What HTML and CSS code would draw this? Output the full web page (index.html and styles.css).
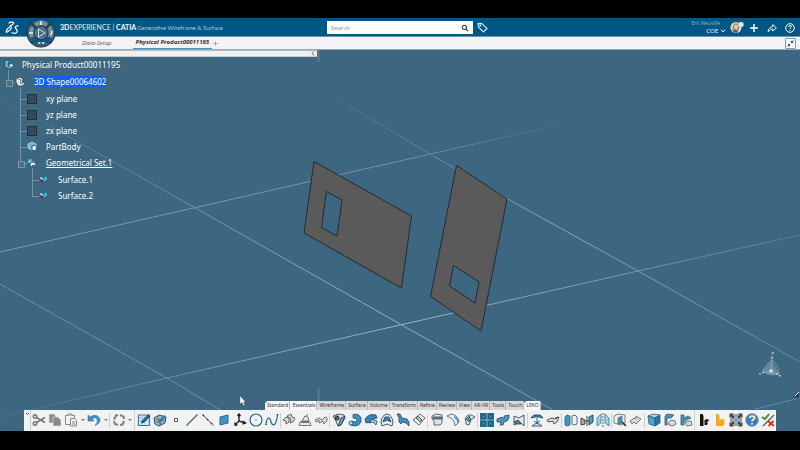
FILE: index.html
```html
<!DOCTYPE html>
<html lang="en">
<head>
<meta charset="utf-8">
<title>3DEXPERIENCE | CATIA</title>
<link rel="stylesheet" href="styles.css">
</head>
<body>
<header class="topbar">
  <div class="left">
  <svg class="logo" viewBox="0 0 14 14" fill="none" stroke="#fff" stroke-width="1.2"><path d="M3.5 2.2C6 .6 9.300 .8 8.500 2.600C7.800 4 5.500 4.600 4.500 4.600C7 4.800 6.800 8 4 9.800C2 11.200 .8 12.500 1.500 9.500C2 8 3.500 6.500 5 6M13.500 5.200C11.500 4.200 9.500 5.500 10.500 7.200C11.500 8.500 13 9.200 12 11C11 12.800 8 12.600 6.500 11.400"/></svg>
  <button class="compass" aria-label="Compass">
    <svg viewBox="0 0 30 30"><defs><radialGradient id="ring"><stop offset=".4" stop-color="#527186"/><stop offset=".72" stop-color="#8199a9"/><stop offset="1" stop-color="#16324a"/></radialGradient></defs>
      <circle cx="15" cy="15" r="14.500" fill="url(#ring)"/><path d="M5 5L11 11M25 5L19 11M5 25L11 19M25 25L19 19" stroke="#24445e" stroke-width="3"/><path d="M3.500 20A13 13 0 0 0 26.500 20L20 18A7 7 0 0 1 10 18Z" fill="#14567f"/><circle cx="15" cy="15" r="7" fill="#34566e" stroke="#17364d"/><circle cx="15" cy="15" r="5.500" fill="#456a82" stroke="#7898aa" stroke-width=".6"/><path d="M12.500 11L19 15L12.500 19Z" fill="none" stroke="#d5e1e8"/><path d="M15 3v4M3 15h4M26 13l-1 4M12 25h2.500M16 25h2.500" stroke="#f1f6f9" stroke-width="1.500"/></svg>
  </button>
  <h1 class="brand"><b>3D</b>EXPERIENCE | <b>CATIA</b><span>Generative Wireframe &amp; Surface</span></h1>
  </div>
  <form class="search"><input type="search" placeholder="Search" aria-label="Search"><button type="button" aria-label="Search"><svg viewBox="0 0 10 10" fill="none" stroke="#333" stroke-width="1.300"><circle cx="4.200" cy="4.200" r="2.600"/><path d="M6.200 6.200L9 9"/></svg></button></form>
  <div class="right">
  <button class="tool-link" aria-label="Tags"><svg viewBox="0 0 11 11" fill="none" stroke="#dce9f1" stroke-width="1.100"><path d="M1 1.500L4.500 1.200L10 6.500L6.500 10L1.300 5Z"/><circle cx="3.300" cy="3.400" r=".6"/></svg></button>
  <div class="user"><span>Eric Neuville</span><button>COE <svg viewBox="0 0 6 4" fill="none" stroke="#fff"><path d="M.8 .8L3 2.700L5.200 .8"/></svg></button></div>
  <svg class="avatar" viewBox="0 0 14 13"><circle cx="6" cy="6.500" r="5.500" fill="#dbe0db"/><path d="M2 10L3 4Q6 0 9 4L9 9L6 12Z" fill="#b88b62"/><path d="M4 4h4l-1 5H5Z" fill="#e9c8aa"/><path d="M3 11L5 8L8 10L7 12Z" fill="#4d6577"/><circle cx="11" cy="3.500" r="2.600" fill="#e4e7e8" stroke="#a6b5bd" stroke-width=".5"/></svg>
  <nav class="actions">
    <button aria-label="Add"><svg viewBox="0 0 10 10" stroke="#fff" stroke-width="1.500"><path d="M5 1v8M1 5h8"/></svg></button>
    <button aria-label="Share"><svg viewBox="0 0 10 10" fill="none" stroke="#e5eff5"><path d="M1 8.800Q1.500 4 5.800 3.800V1.500L9.400 5L5.800 8V6Q3 6 1 8.800Z"/></svg></button>
    <button aria-label="Help"><svg viewBox="0 0 10 10" fill="none" stroke="#fff"><circle cx="5" cy="5" r="4.300"/><path d="M3.500 4Q3.800 2.500 5 2.500Q6.600 2.600 6.400 3.900Q5.200 4.700 5 6M5 7v1"/></svg></button>
  </nav>
  </div>
</header>
<nav class="tabs">
  <a href="#setup">Data-Setup</a><a href="#product" class="current">Physical Product00011195</a><button class="add" aria-label="New tab"><svg viewBox="0 0 6 6" stroke="#999"><path d="M3 .5v5M.5 3h5"/></svg></button>
  <button class="shrink" aria-label="Restore"><svg viewBox="0 0 10 10" fill="#22577a"><path d="M5.500 1.500V4.500H8.500ZM4.500 8.500V5.500H1.500Z"/><path d="M6 4L8.500 1.500M4 6L1.500 8.500" stroke="#22577a"/></svg></button>
</nav>
<main class="viewport">
  <svg class="scene" viewBox="0 0 800 381" preserveAspectRatio="xMidYMid slice" fill="none">
    <defs>
      <linearGradient id="fadeA" gradientUnits="userSpaceOnUse" x1="0" y1="0" x2="580" y2="0"><stop stop-color="#7898b0"/><stop offset=".7" stop-color="#6f91a8"/><stop offset="1" stop-color="#3d6680"/></linearGradient>
      <linearGradient id="fadeB" gradientUnits="userSpaceOnUse" x1="0" y1="0" x2="800" y2="0"><stop stop-color="#466e87"/><stop offset=".5" stop-color="#9bb4c7"/><stop offset="1" stop-color="#567c95"/></linearGradient>
      <linearGradient id="fadeD" gradientUnits="userSpaceOnUse" x1="0" y1="0" x2="550" y2="0"><stop stop-color="#456d85"/><stop offset=".7" stop-color="#96b0c4"/><stop offset="1" stop-color="#7898b0"/></linearGradient>
      <linearGradient id="fadeE" gradientUnits="userSpaceOnUse" x1="305" y1="0" x2="800" y2="0"><stop stop-color="#3d6680"/><stop offset=".5" stop-color="#86a4ba"/><stop offset="1" stop-color="#67899f"/></linearGradient>
    </defs>
    <path d="M0 202L580 70" stroke="url(#fadeA)"/>
    <path d="M0 367L167 328L400 275L638 221L800 185" stroke="url(#fadeB)"/>
    <path d="M0 234L167 328L222 361" stroke="#6c8fa7"/>
    <path d="M0 48L160 138L400 274L553 360" stroke="url(#fadeD)"/>
    <path d="M305 30L430 104L506 148L638 221L800 312" stroke="url(#fadeE)"/>
    <path d="M755 359L800 348" stroke="#6588a0"/>
    <path d="M318.500 0V12M318.500 338V352" stroke="#657781" stroke-width="2"/>
    <g fill="#5a5a5a" fill-rule="evenodd" stroke="#252b2e">
      <path d="M314 111.500L411.500 166L401.500 238L304 183ZM326.500 141.500L342 150L337 186L321.500 177.500Z"/>
      <path d="M456.500 115.500L507 149L481 281L430.500 246.500ZM453.500 215.500L479 232L475 253L449.500 236Z"/>
    </g>
    <g><path d="M772 310L762 321Q770 328 779 324Z" fill="#7f9dad" opacity=".6"/><path d="M772 303V310M772 310Q767 313 762 322Q771 325 779 324Q778 314 772 310L771 321L762 323M771 321L780 326" stroke="#86a5b5" stroke-width=".8"/><path d="M773 302v1.500M772 307v1.500M770 320h2v2h-2ZM760 323v1.500M780 325v1.500M777 323v1.500M763 322v1" stroke="#e7f0f4" stroke-width="1.200"/><path d="M792 348L799 341L798 349L795 346Z" fill="#253641"/><path d="M795 346L799 342" stroke="#eee"/></g>
    <path d="M240 346V354L242 352.500L243.500 355.500L244.800 355L243.500 352H245.500Z" fill="#fff" stroke="#555" stroke-width=".4"/>
  </svg>
  <button class="panel-bar" aria-label="Collapse panel"><svg viewBox="0 0 4 5" fill="none" stroke="#555"><path d="M3 .5L1.200 2.500L3 4.500"/></svg></button>
  <ul class="tree">
    <li><div class="row root"><svg class="node" viewBox="0 0 16 16"><path d="M5 4L8 3L10 5L8 6V9L12 10L10 12L5 10Z" fill="#66c4ed" stroke="#173f59" stroke-width=".7"/><path d="M9 8l3-1 1 2-2 1Z" fill="#dbf3fc"/></svg><span>Physical Product00011195</span></div>
      <ul>
        <li><div class="row open"><svg class="node" viewBox="0 0 16 16"><path d="M4 5L8 3L11 5L10 8L13 9L11 12L6 12L4 8Z" fill="#e8edf0" stroke="#33414a" stroke-width=".8"/><path d="M6 5l3 1-1 3M8 9l3 1" fill="none" stroke="#777"/></svg><span class="selected">3D Shape00064602</span></div>
          <ul>
            <li><div class="row"><i class="plane"></i><span>xy plane</span></div></li>
            <li><div class="row"><i class="plane"></i><span>yz plane</span></div></li>
            <li><div class="row"><i class="plane"></i><span>zx plane</span></div></li>
            <li><div class="row"><svg class="node" viewBox="0 0 16 16"><path d="M4 5L8 3L12 5V8L8 11L4 9Z" fill="#67b6dc" stroke="#dbeef7" stroke-width=".7"/><path d="M8 7L11 6L13 9L11 12L8 11Z" fill="#e8eef1" stroke="#254153" stroke-width=".8"/></svg><span>PartBody</span></div></li>
            <li><div class="row open"><svg class="node" viewBox="0 0 16 16"><path d="M4 5L7 4L9 6L7 8L4 8Z" fill="#62bbe6"/><path d="M8 5l3 1-1 2ZM6 9l2-2 4 1-1 3-2-1-2 2Z" fill="#e8edf0" stroke="#354b59" stroke-width=".7"/></svg><span class="active">Geometrical Set.1</span></div>
              <ul>
                <li><div class="row"><svg class="node" viewBox="0 0 16 16"><path d="M4 5L7 6L8 10L5 9Z" fill="#b9dcec"/><path d="M7 5L11 4L12 8L8 10Z" fill="#4aa9de" stroke="#1c4a66" stroke-width=".6"/><path d="M4 7L7 8V11L5 12Z" fill="#3a4047"/><path d="M4 10L6 12" stroke="#b8402c" stroke-width="1.500"/></svg><span>Surface.1</span></div></li>
                <li><div class="row"><svg class="node" viewBox="0 0 16 16"><path d="M4 5L7 6L8 10L5 9Z" fill="#b9dcec"/><path d="M7 5L11 4L12 8L8 10Z" fill="#4aa9de" stroke="#1c4a66" stroke-width=".6"/><path d="M4 7L7 8V11L5 12Z" fill="#3a4047"/><path d="M4 10L6 12" stroke="#b8402c" stroke-width="1.500"/></svg><span>Surface.2</span></div></li>
              </ul></li>
          </ul></li>
      </ul></li>
  </ul>
  <section class="dock">
    <nav class="sections"><button class="lit mark">Standard</button><button class="lit">Essentials</button><button>Wireframe</button><button>Surface</button><button>Volume</button><button>Transform</button><button>Refine</button><button>Review</button><button>View</button><button>AR-VR</button><button>Tools</button><button>Touch</button><button class="lit mark">LEKO</button></nav>
    <div class="toolbar">
      <button class="grip" aria-label="Toolbar options"><svg viewBox="0 0 5 4" fill="none" stroke="#555"><path d="M1 1L2.500 2.500L4 1"/></svg></button>
      <button aria-label="Cut"><svg viewBox="0 0 14 14" fill="none" stroke="#777" stroke-width="1.600"><circle cx="3" cy="3.500" r="1.700"/><circle cx="3" cy="10.500" r="1.700"/><path d="M4.500 4.500L13 9.500M4.500 9.500L13 4.500"/></svg></button>
      <button aria-label="Copy"><svg viewBox="0 0 14 14" fill="#8a8a8a" stroke="#e8e8e8" stroke-width=".6"><path d="M1 1H6L8 3V10H1Z"/><path d="M5 4H10L13 7V13H5Z"/></svg></button>
      <button aria-label="Paste"><svg viewBox="0 0 14 14" fill="#f2f2f2" stroke="#868686"><path d="M1.500 2.500H10.500V11.500H1.500Z"/><path d="M4 2.500V1H8V2.500M6.500 5.500H10.500L12.500 7.500V13H6.500ZM8 9h3M8 11h3"/></svg></button>
      <button class="drop" aria-label="Paste options"></button>
      <button aria-label="Undo"><svg viewBox="0 0 14 14"><path d="M1 2V8H7L5 6Q8 3.500 10 6Q11.500 9 8 12.500Q14 10 12.800 5.500Q9.500 0 3 4Z" fill="#3e95c9" stroke="#245b7c" stroke-width=".5"/></svg></button>
      <button class="drop" aria-label="Undo options"></button>
      <i class="sep"></i>
      <button aria-label="Update"><svg viewBox="0 0 14 14" fill="none" stroke="#858585" stroke-width="2.200"><path d="M2 6.500L4 2.500L6 2M8 2L11.500 3.500L12 6M12 8L10.500 11.500L8 12M6 12L3 11L2 8"/></svg></button>
      <button class="drop" aria-label="Update options"></button>
      <i class="sep line"></i>
      <button aria-label="Sketch"><svg viewBox="0 0 14 14"><path d="M1.500 2H12.500V12.500H1.500Z" fill="#d9edf6" stroke="#2d7da8" stroke-width="1.200"/><path d="M2 5h10M2 8h10M5 3v9M8 3v9" stroke="#7bb3d0" stroke-width=".6"/><path d="M4 10.500L5 7.500L11 1.500L13 3.500L7 9.500Z" fill="#20384a"/><path d="M6 8l5-5" stroke="#4aa3d4"/></svg></button>
      <button aria-label="3D sketch"><svg viewBox="0 0 14 14"><path d="M1 5L6 2L13 4L12 10L6 13L2 11Z" fill="#a2b5c0" stroke="#355060"/><path d="M2 6L7 7L12 4M7 7V13M4 3L9 12M3 9L12 7" fill="none" stroke="#485d69" stroke-width=".7"/><path d="M5 10L6 7L11 2L13 3L8 9Z" fill="#2b82b1"/></svg></button>
      <button aria-label="Point"><svg viewBox="0 0 14 14" fill="#fff" stroke="#555"><path d="M5.500 5.500H8.500V8.500H5.500Z"/></svg></button>
      <button aria-label="Line"><svg viewBox="0 0 14 14" stroke="#376c8c" stroke-width="1.200"><path d="M1.500 12.500L12.500 1.500"/></svg></button>
      <button aria-label="Axis line"><svg viewBox="0 0 14 14" stroke="#333" stroke-width="1.200"><path d="M1.500 1.500L12.500 12.500" stroke-dasharray="3 .8 1 .8"/></svg></button>
      <button aria-label="Plane"><svg viewBox="0 0 14 14"><path d="M3 4L11 2V10L3 12Z" fill="#3c96cb" stroke="#286992"/></svg></button>
      <button aria-label="Axis system"><svg viewBox="0 0 14 14" fill="none" stroke="#222" stroke-width="1.400"><path d="M6 1V8L12 10M6 8L2 12M4.500 3L6 1L7.500 3M10 8L12.500 10L9.500 11M2 9.500V12H4.500"/></svg></button>
      <button aria-label="Circle"><svg viewBox="0 0 14 14" fill="none" stroke="#28698e" stroke-width="1.200"><circle cx="7" cy="7" r="6"/><path d="M6.300 7h1.400"/></svg></button>
      <button aria-label="Spline"><svg viewBox="0 0 14 14" fill="none" stroke="#28698e" stroke-width="1.200"><path d="M1 11Q2 3 5 6Q7 14 10 11Q12 8 12.500 1"/><path d="M1 11v1M12.500 1v1" stroke="#333" stroke-width="1.500"/></svg></button>
      <i class="sep"></i>
      <button aria-label="Projection"><svg viewBox="0 0 14 14" fill="#dadddf" stroke="#555" stroke-width=".9"><path d="M1 7L4 4L7 5V9L4 11V8ZM5 3L9 1L10 4L13 5L11 9L8 10L9 6Z"/></svg></button>
      <button aria-label="Intersection"><svg viewBox="0 0 14 14" fill="#e8e9e9" stroke="#777"><path d="M1 12.500L2 9H12L13 12.500ZM4 8L7 3L10 4L11 8ZM7 4L10 1"/><path d="M3 9h8" stroke="#444"/></svg></button>
      <button aria-label="Parallel curve"><svg viewBox="0 0 14 14" fill="#ddd" stroke="#666" stroke-width=".9"><path d="M1 7L5 5L8 7L11 4L13 5V8L10 11L9 8L5 10V7L2 9Z"/></svg></button>
      <i class="sep"></i>
      <button aria-label="Extrude"><svg viewBox="0 0 14 14" stroke="#243944" stroke-width=".8"><path d="M1 3L6 1L12 2L13 5L9 12L6 13L4 8Z" fill="#d5e6ee"/><path d="M9 5L13 3L9 12L6 13Z" fill="#5aa9d0"/><circle cx="5" cy="5" r="2.200" fill="#555"/></svg></button>
      <button aria-label="Revolve"><svg viewBox="0 0 14 14" stroke="#254f67" stroke-width=".8"><path d="M5 1.500Q11 0 13 5Q14 12 7 13Q2 13 1 10L4 8Q8 10 9 7Q9 5 5 5Z" fill="#3792c5"/><ellipse cx="3" cy="10" rx="2" ry="2" fill="#b8dff0"/></svg></button>
      <button aria-label="Sweep"><svg viewBox="0 0 14 14" stroke="#20485f" stroke-width=".8"><path d="M1 6Q5 0 12 2L13 5Q8 5 6 9L2 10Z" fill="#3584b1"/><path d="M5 10L8 6L13 8L12 12L9 9Z" fill="#99cbe2"/></svg></button>
      <button aria-label="Dome"><svg viewBox="0 0 14 14" stroke="#26495d" stroke-width=".9"><path d="M1 9Q2 2 7 1Q12 2 13 9L12 13L7 11L2 13Z" fill="#e6eff4"/><path d="M3 9L5 4H9L11 9L7 7Z" fill="#3187ba"/></svg></button>
      <button aria-label="Loft"><svg viewBox="0 0 14 14" stroke="#244b63" stroke-width=".8"><path d="M1 1L4 1L6 5L11 6L13 9V13L10 10L6 9L5 11L3 9V5Z" fill="#3990c0"/></svg></button>
      <button aria-label="Blend"><svg viewBox="0 0 14 14" stroke="#555" stroke-width=".9"><path d="M1 7L8 1L13 5L7 12Z" fill="#efefef"/><path d="M4 5L8 9L10 7L6 3Z" fill="#8fc5df"/></svg></button>
      <i class="sep"></i>
      <button aria-label="Thick surface"><svg viewBox="0 0 14 14" stroke="#4d5961" stroke-width=".9"><path d="M2 3L6 1L12 2V10L10 12L4 12V8L2 6Z" fill="#e0e3e4"/><path d="M3 4H12V6H3Z" fill="#358dbb"/></svg></button>
      <button aria-label="Fillet"><svg viewBox="0 0 14 14" stroke="#55656f" stroke-width=".9"><path d="M1 3L5 1Q12 2 13 9L9 13Q9 6 1 3Z" fill="#e6eff3"/><path d="M8 4Q12 5 12 10" fill="none" stroke="#3d96c4" stroke-width="1.500"/></svg></button>
      <button aria-label="Chamfer"><svg viewBox="0 0 14 14" stroke="#45545d" stroke-width=".9"><path d="M3 7Q4 1 9 2L13 4Q8 6 7 12L4 11V8Z" fill="#dfe6e9"/><path d="M4 6L7 3L9 6L7 9Z" fill="#3c9aca"/></svg></button>
      <i class="sep"></i>
      <button aria-label="Pattern"><svg viewBox="0 0 14 14"><path d="M0 0H14V14H0Z" fill="#246b91"/><path d="M7 0v14M0 7h14" stroke="#8fbdd4" stroke-width=".8"/><path d="M2 2h3v3H2ZM9 2h3v3H9ZM2 9h3v3H2ZM9 9h3v3H9Z" fill="#4e9fc6" stroke="#173f58" stroke-dasharray="2 1"/></svg></button>
      <button aria-label="Extrapolate"><svg viewBox="0 0 14 14" stroke="#275067" stroke-width=".8"><path d="M1 6L6 4L8 6V3L13 2V5L11 8L8 9L7 12L4 12L5 9L1 9Z" fill="#4a96bd"/></svg></button>
      <button aria-label="Trim"><svg viewBox="0 0 14 14" stroke="#39454d" stroke-width=".9"><path d="M2 3L7 5L12 2V13L8 9L2 12Z" fill="#e4e9eb"/><path d="M2 9L6 7L9 11L4 11Z" fill="#3687b3"/></svg></button>
      <i class="sep"></i>
      <button aria-label="Join"><svg viewBox="0 0 14 14" stroke="#264b60" stroke-width=".9"><path d="M1 5Q3 1 7 2Q11 1 13 5L9 4H5Z" fill="#3891c1"/><path d="M7 5V10M4 8L7 10L10 8M2 13Q7 8 12 13Z" fill="#eee"/></svg></button>
      <button aria-label="Healing"><svg viewBox="0 0 14 14" fill="#dde0e2" stroke="#444" stroke-width=".9"><path d="M1 7L6 5L9 6L13 4L11 9L8 11L7 8L2 9Z"/><path d="M9 5l3-1"/></svg></button>
      <i class="sep"></i>
      <button aria-label="Translate"><svg viewBox="0 0 14 14" stroke="#476273" stroke-width=".9"><path d="M1 4L3 2L6 3V12L3 13L1 12Z" fill="#3b99c8"/><path d="M8 3L11 2L13 4V11L10 12L8 11Z" fill="#eee"/></svg></button>
      <button aria-label="Symmetry"><svg viewBox="0 0 14 14" stroke="#333" stroke-width=".9"><path d="M1 5L5 7V11L1 12Z" fill="#aaa"/><path d="M9 4L13 2V9L9 12Z" fill="#49a1cb"/><path d="M7 3V13M5 8H9"/></svg></button>
      <button aria-label="Mirror"><svg viewBox="0 0 14 14" stroke="#3d87ac" stroke-width=".9"><path d="M1 5L5 1V10L1 13ZM13 5L9 1V10L13 13Z" fill="#9fd1e7"/><path d="M7 0V14" stroke="#555" stroke-dasharray="2 1"/></svg></button>
      <i class="sep"></i>
      <button aria-label="Inspect"><svg viewBox="0 0 14 14" stroke="#66737b" stroke-width=".9"><path d="M1 3L5 1L12 2V10L8 12L1 10Z" fill="#eee"/><path d="M5 5L9 3V10L5 11Z" fill="#3a94c0"/><path d="M9 9L13 13" stroke="#222" stroke-width="1.500"/></svg></button>
      <button aria-label="Surface patch"><svg viewBox="0 0 14 14" fill="#d8d9da" stroke="#777"><path d="M1 8L5 5L7 6V3L12 6L9 9L7 11L5 9L3 11Z"/></svg></button>
      <i class="sep"></i>
      <button aria-label="Volume"><svg viewBox="0 0 14 14" stroke="#28617f" stroke-width=".8"><path d="M1 3L6 1L13 2L8 5Z" fill="#a7d4e7"/><path d="M1 3L8 5V13L2 11Z" fill="#4aa3cf"/><path d="M8 5L13 2V10L8 13Z" fill="#2675a0"/></svg></button>
      <button aria-label="Replace"><svg viewBox="0 0 14 14" stroke="#596870" stroke-width=".9"><path d="M2 3L4 1L11 2L8 5H4V12H2Z" fill="#3993be"/><path d="M5 11L8 7L12 8L13 11L9 13Z" fill="#ddd"/></svg></button>
      <button aria-label="Reorder"><svg viewBox="0 0 14 14" stroke="#596870" stroke-width=".9"><path d="M2 2H5V5L9 3L12 5L5 8V12H2Z" fill="#3993be"/><path d="M6 9L12 8L13 12L8 13Z" fill="#ddd"/></svg></button>
      <i class="sep line"></i>
      <button aria-label="Black marker"><svg viewBox="0 0 14 14" fill="#151515"><path d="M3 1H5.500L6.500 3V13H3ZM7.500 7L10 6L12 7L11 8.500L9.500 9L11 10L10 12H7.500Z"/></svg></button>
      <button aria-label="Yellow marker"><svg viewBox="0 0 14 14" fill="#f4a81d"><path d="M3 1H5.500L6.500 3V7L10 6L12 7L10.500 9L12 10L10 13H3Z"/></svg></button>
      <button aria-label="Fit all"><svg viewBox="0 0 14 14"><path d="M1 1H13V13H1Z" fill="#9aa1a5"/><path d="M2 2L5 5M12 2L9 5M2 12L5 9M12 12L9 9" stroke="#222" stroke-width="1.500"/><path d="M5 5H9V9H5Z" fill="#49a3d3" stroke="#ddd" stroke-width=".6"/><path d="M1 4.500V1H4.500M9.500 1H13V4.500M13 9.500V13H9.500M4.500 13H1V9.500" fill="none" stroke="#333"/></svg></button>
      <button aria-label="Assistance"><svg viewBox="0 0 14 14"><circle cx="7" cy="7" r="6.500" fill="#3d7fb5" stroke="#9ab1c2"/><path d="M4.500 5Q5 3 7 3Q10 3 9.500 5.500Q7 7 7 8.500M7 10v1.500" fill="none" stroke="#fff" stroke-width="1.700"/></svg></button>
      <button aria-label="Check"><svg viewBox="0 0 14 14" fill="none" stroke-width="2"><path d="M1 4L4 6L8 1" stroke="#3e8e35"/><path d="M2 13L13 2" stroke="#555" stroke-width="1.200"/><path d="M7 8L13 13M12.500 8L7.500 13" stroke="#d23a27"/></svg></button>
    </div>
  </section>
</main>
</body>
</html>
```
FILE: styles.css
```css
* { box-sizing: border-box; }

body {
  margin: 0;
  min-height: 100vh;
  padding: 18px 0 19px;
  display: flex;
  flex-direction: column;
  background: #000;
  font-family: "Open Sans", "Noto Sans", sans-serif;
}

button {
  display: block;
  margin: 0;
  padding: 0;
  border: 0;
  background: none;
  color: inherit;
  font: inherit;
}

svg { display: block; }

ul { margin: 0; padding: 0; list-style: none; }

.topbar {
  position: relative;
  z-index: 2;
  height: 19px;
  padding: 0 5px;
  display: grid;
  grid-template-columns: 1fr 146px 1fr;
  align-items: center;
  background: #005686;
  border-bottom: 1px solid #6b96b1;
  color: #fff;
}

.left, .right { display: flex; align-items: center; }

.logo { width: 14px; height: 14px; }

.compass { position: absolute; left: 26px; top: 0; width: 30px; height: 30px; }

.brand {
  margin: 0 0 0 41px;
  font: 400 7px/18px Lato, sans-serif;
  white-space: nowrap;
  color: #e3eef5;
}

.brand b { color: #fff; }
.brand span { margin-left: 1px; font-size: 6px; color: #a9cbe0; }

.search {
  height: 13px;
  display: flex;
  align-items: center;
  background: #fff;
}

.search input {
  flex: 1;
  min-width: 0;
  padding: 0 4px;
  border: 0;
  background: none;
  outline: 0;
  font: 6px/12px "Open Sans", sans-serif;
}

.search input::placeholder { color: #888; }
.search svg { width: 8px; height: 8px; margin-right: 4px; }
.tool-link { margin-left: 4px; }
.tool-link svg { width: 11px; height: 11px; }

.user {
  flex: 1;
  display: flex;
  flex-direction: column;
  align-items: flex-end;
  margin-right: 4px;
  font-size: 6px;
  line-height: 8px;
}

.user span { margin-right: 6px; font-size: 5px; line-height: 7px; color: #8fb6cf; }
.user button { display: flex; align-items: center; gap: 2px; }
.user svg { width: 6px; height: 4px; }
.avatar { width: 14px; height: 13px; }
.actions { margin-left: 5px; display: flex; gap: 8px; }
.actions svg { width: 10px; height: 10px; }

.tabs {
  position: relative;
  z-index: 1;
  height: 13px;
  padding: 0 4px 0 79px;
  display: flex;
  align-items: center;
  background: #f3f3f5;
  border-bottom: 1px solid #93a9b6;
  font: italic 400 6px/11px "Open Sans", sans-serif;
}

.tabs a { padding: 0 3px; color: #555; text-decoration: none; }

.tabs .current {
  margin-left: 18px;
  border-bottom: 1px solid #3e95c8;
  color: #333;
  font-weight: 700;
}

.add { margin-left: 1px; }
.add svg { width: 5px; height: 5px; }

.shrink {
  margin-left: auto;
  border: 1px solid #7d9eb4;
  border-radius: 1px;
  background: #fff;
}

.shrink svg { width: 9px; height: 9px; }

.viewport {
  position: relative;
  flex: 1;
  display: flex;
  flex-direction: column;
  background: #3d6680;
  overflow: hidden;
}

.scene { position: absolute; inset: 0; width: 100%; height: 100%; }

.panel-bar {
  position: relative;
  width: 40%;
  max-width: 317px;
  height: 7px;
  padding-right: 2px;
  display: flex;
  align-items: center;
  justify-content: flex-end;
  background: #f0f0ef;
  border-top: 1px solid #b5bdc1;
  border-bottom: 1px solid #c5cbce;
}

.panel-bar svg { width: 4px; height: 5px; }

.tree {
  position: relative;
  margin-bottom: auto;
  color: #fff;
  font: 8px/12px "Noto Sans", sans-serif;
}

.tree ul { padding: 1px 0 0 12px; }
.tree li { position: relative; }

.row { position: relative; display: flex; align-items: center; gap: 6px; height: 16px; }
.node { width: 16px; height: 16px; }
.selected { background: #0b63ee; }
.active { text-decoration: underline; }

.plane {
  width: 10px;
  height: 10px;
  margin: 0 3px;
  border: 1px solid #1e303c;
  background: #34495a;
}

.tree li li::before {
  content: "";
  position: absolute;
  left: -4px;
  top: -4px;
  bottom: 0;
  border-left: 1px solid #7592a4;
}

.tree li li:last-child::before { bottom: auto; height: 12px; }

.tree li li > .row::before {
  content: "";
  position: absolute;
  left: -4px;
  top: 8px;
  width: 7px;
  border-top: 1px solid #7592a4;
}

.tree .row.open::after {
  content: "";
  position: absolute;
  left: -6px;
  top: 6px;
  width: 5px;
  height: 5px;
  border: 1px solid #7d97a7;
  background: #4d7083;
}

.dock { position: relative; margin: 0 24px; }

.sections {
  width: max-content;
  margin-left: 241px;
  display: flex;
  height: 9px;
  font: 5px/9px "Noto Sans", sans-serif;
  color: #333;
}

.sections button { padding: 0 1px 0 2px; background: #d8d8d8; border-right: 1px solid #b5b5b5; }
.sections .lit { background: #f7f7f7; }
.sections .mark { background: linear-gradient(135deg, #3f97ca 2px, #f7f7f7 2px); }

.toolbar {
  height: 21px;
  padding-bottom: 1px;
  display: flex;
  align-items: center;
  background: #f2f2f2;
}

.toolbar button { width: 16px; display: flex; justify-content: center; }
.toolbar svg { width: 14px; height: 14px; }

.toolbar .grip { width: 7px; height: 20px; padding-top: 2px; border-right: 1px solid #ccc; }
.toolbar .grip svg { width: 5px; height: 4px; }
.toolbar .drop { width: 7px; }
.drop::before { content: ""; border: 2px solid transparent; border-top-color: #777; border-bottom: 0; }

.sep { flex: 1; height: 15px; border-left: 1px solid #d0d0d0; }
.sep.line { height: 20px; }
```
